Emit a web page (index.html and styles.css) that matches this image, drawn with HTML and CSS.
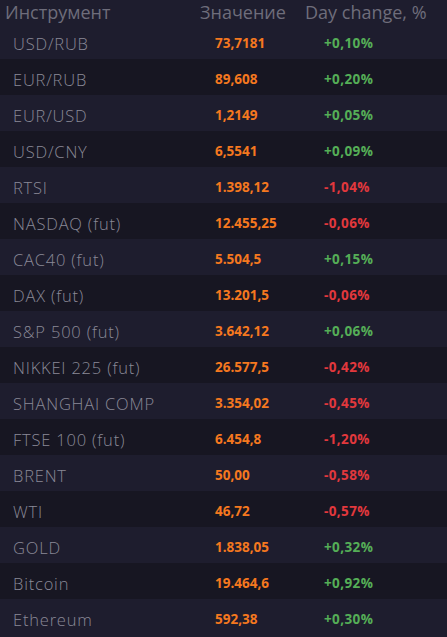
FILE: index.html
```html
<!DOCTYPE html>
<html lang="ru">
<head>
<meta charset="utf-8">
<title>Котировки</title>
<link rel="stylesheet" href="styles.css">
</head>
<body>
<div class="table">
  <div class="head">
    <div class="h-name">Инструмент</div>
    <div class="h-val">Значение</div>
    <div class="h-chg">Day change, %</div>
  </div>
  <div class="rows">
    <div class="row"><div class="name">USD/RUB</div><div class="val">73,7181</div><div class="chg up">+0,10%</div></div>
    <div class="row"><div class="name">EUR/RUB</div><div class="val">89,608</div><div class="chg up">+0,20%</div></div>
    <div class="row"><div class="name">EUR/USD</div><div class="val">1,2149</div><div class="chg up">+0,05%</div></div>
    <div class="row"><div class="name">USD/CNY</div><div class="val">6,5541</div><div class="chg up">+0,09%</div></div>
    <div class="row"><div class="name">RTSI</div><div class="val">1.398,12</div><div class="chg down">-1,04%</div></div>
    <div class="row"><div class="name">NASDAQ (fut)</div><div class="val">12.455,25</div><div class="chg down">-0,06%</div></div>
    <div class="row"><div class="name">CAC40 (fut)</div><div class="val">5.504,5</div><div class="chg up">+0,15%</div></div>
    <div class="row"><div class="name">DAX (fut)</div><div class="val">13.201,5</div><div class="chg down">-0,06%</div></div>
    <div class="row"><div class="name">S&amp;P 500 (fut)</div><div class="val">3.642,12</div><div class="chg up">+0,06%</div></div>
    <div class="row"><div class="name">NIKKEI 225 (fut)</div><div class="val">26.577,5</div><div class="chg down">-0,42%</div></div>
    <div class="row"><div class="name">SHANGHAI COMP</div><div class="val">3.354,02</div><div class="chg down">-0,45%</div></div>
    <div class="row"><div class="name">FTSE 100 (fut)</div><div class="val">6.454,8</div><div class="chg down">-1,20%</div></div>
    <div class="row"><div class="name">BRENT</div><div class="val">50,00</div><div class="chg down">-0,58%</div></div>
    <div class="row"><div class="name">WTI</div><div class="val">46,72</div><div class="chg down">-0,57%</div></div>
    <div class="row"><div class="name">GOLD</div><div class="val">1.838,05</div><div class="chg up">+0,32%</div></div>
    <div class="row"><div class="name">Bitcoin</div><div class="val">19.464,6</div><div class="chg up">+0,92%</div></div>
    <div class="row"><div class="name">Ethereum</div><div class="val">592,38</div><div class="chg up">+0,30%</div></div>
  </div>
</div>
</body>
</html>
```

FILE: styles.css
```css
html, body {
  margin: 0;
  padding: 0;
  background: #1e1d2e;
}
.table {
  display: flex;
  flex-direction: column;
}
.head {
  display: grid;
  grid-template-columns: 200px 105px 1fr;
  height: 23px;
  align-items: center;
  font-family: "Open Sans", sans-serif;
  font-size: 18px;
  color: #6e6d7b;
}
.h-name { padding-left: 5px; }
.rows {
  display: flex;
  flex-direction: column;
}
.row {
  display: grid;
  grid-template-columns: 215px 109px 1fr;
  height: 36px;
  align-items: center;
  background: #1e1d2e;
}
.row:nth-child(even) {
  background: #171622;
}
.name {
  padding-left: 13px;
  padding-top: 5px;
  font-family: "Open Sans", sans-serif;
  font-weight: 300;
  font-size: 16.5px;
  letter-spacing: 0.8px;
  color: #8a8997;
}
.val, .chg {
  padding-top: 3px;
  font-family: "Open Sans", sans-serif;
  font-weight: 700;
  font-size: 13.5px;
}
.val { color: #f5781f; }
.chg { letter-spacing: 0.4px; }
.up { color: #55ae57; }
.down { color: #e2383d; }
```
